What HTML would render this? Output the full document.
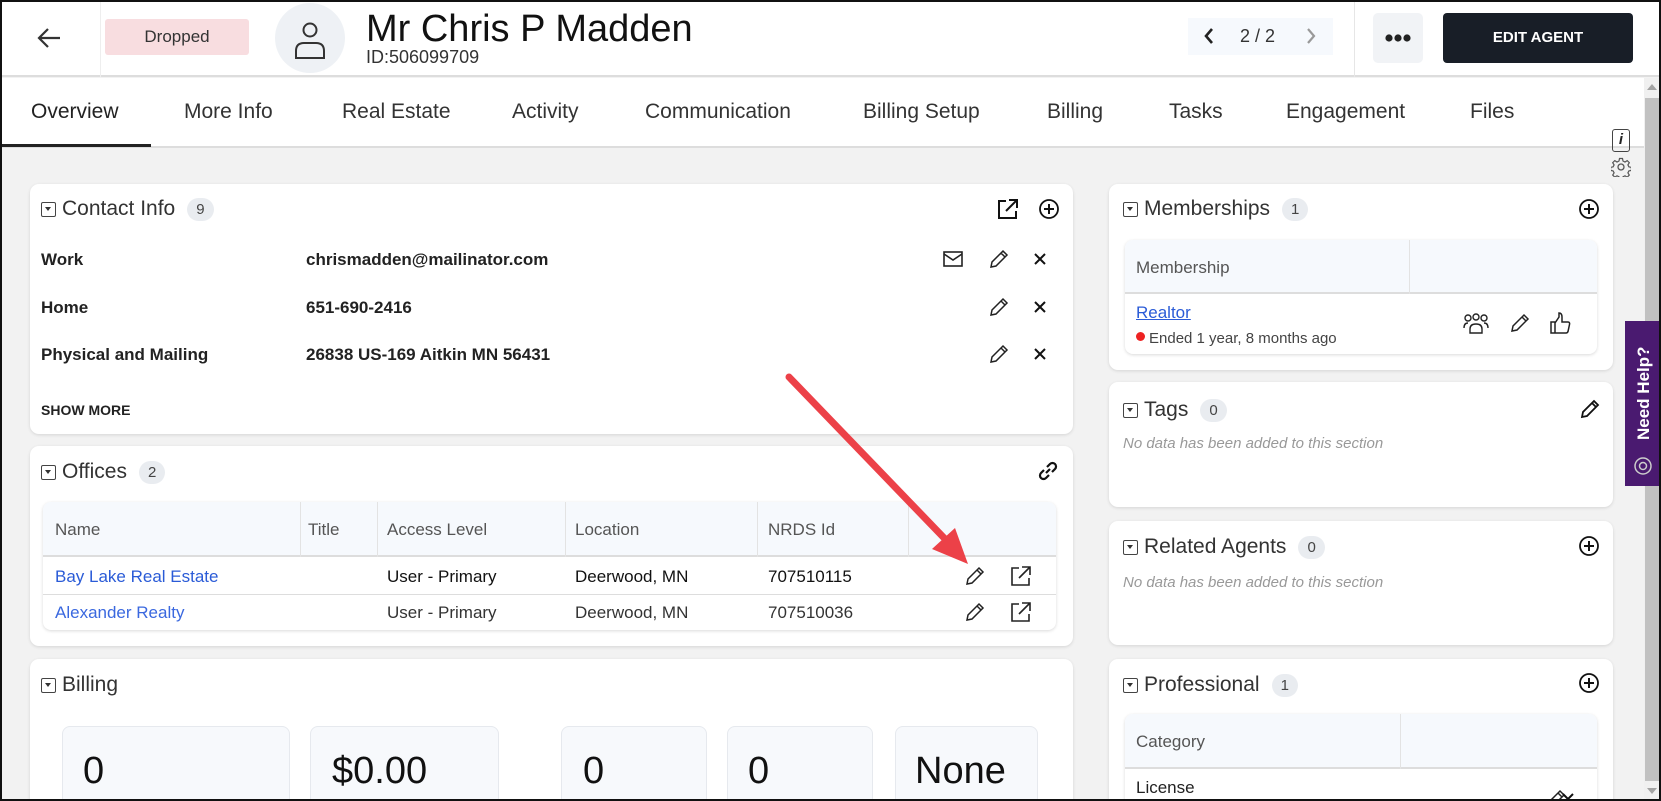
<!DOCTYPE html>
<html style="overflow:hidden;width:1661px;height:801px"><head><meta charset="utf-8"><style>
*{box-sizing:border-box;margin:0;padding:0}
html,body{width:1661px;height:801px;overflow:hidden}
body{background:#f2f2f2;font-family:"Liberation Sans",sans-serif;color:#222}
#w{position:relative;width:1661px;height:801px;overflow:hidden}
.a{position:absolute}
.card{position:absolute;background:#fff;border-radius:9px;box-shadow:0 1px 3px rgba(0,0,0,.12)}
.tab{position:absolute;top:100px;font-size:21px;color:#333}
.ttl{position:absolute;font-size:21px;color:#333;display:flex;align-items:center;gap:6px}
.chk{width:15px;height:15px;border:1.5px solid #444;border-radius:2px;position:relative;display:inline-block}
.chk:after{content:"";position:absolute;left:3px;top:4px;border-left:3.5px solid transparent;border-right:3.5px solid transparent;border-top:4px solid #333}
.badge{display:inline-block;background:#e9ecf0;border-radius:12px;font-size:15px;padding:3px 9px;color:#444;margin-left:6px}
.lbl{position:absolute;font-size:17px;font-weight:bold;color:#222}
.th{position:absolute;font-size:17px;color:#555}
.td{position:absolute;font-size:17px}
.nod{position:absolute;font-size:15px;font-style:italic;color:#999}
.num{position:absolute;font-size:38px;color:#111}
.box{position:absolute;top:726px;height:80px;background:#f7f9fc;border:1px solid #e6e9ee;border-radius:8px}
svg{position:absolute}
</style></head><body><div id="w">
<div class="a" style="left:0;top:0;width:1661px;height:77px;background:#fff;border-bottom:2px solid #ddd"></div>
<div class="a" style="left:100px;top:0;width:1px;height:77px;background:#eee"></div>
<div class="a" style="left:1354px;top:0;width:1px;height:77px;background:#e6e6e6"></div>
<svg style="left:36px;top:26px" width="26" height="24" viewBox="0 0 26 24"><path d="M24 12H3M12 3L3 12l9 9" fill="none" stroke="#333" stroke-width="2.2"/></svg>
<div class="a" style="left:105px;top:19px;width:144px;height:36px;background:#f8dde0;border-radius:3px;font-size:17px;color:#333;text-align:center;line-height:36px">Dropped</div>
<div class="a" style="left:275px;top:3px;width:70px;height:70px;border-radius:50%;background:#eef1f5"></div>
<svg style="left:292px;top:20px" width="36" height="40" viewBox="0 0 36 40"><circle cx="18" cy="10" r="6.5" fill="none" stroke="#333" stroke-width="2"/><path d="M4 38V31q0-8 8-8h12q8 0 8 8v7z" fill="none" stroke="#333" stroke-width="2"/></svg>
<div class="a" style="left:366px;top:8px;font-size:38px;color:#111">Mr Chris P Madden</div>
<div class="a" style="left:366px;top:47px;font-size:18px;color:#333">ID:506099709</div>
<div class="a" style="left:1188px;top:18px;width:145px;height:37px;background:#f6f9fd"></div>
<svg style="left:1203px;top:27px" width="12" height="18" viewBox="0 0 12 18"><path d="M9 2L3 9l6 7" fill="none" stroke="#222" stroke-width="2.6"/></svg>
<div class="a" style="left:1240px;top:26px;font-size:18px;color:#333">2 / 2</div>
<svg style="left:1305px;top:27px" width="12" height="18" viewBox="0 0 12 18"><path d="M3 2l6 7-6 7" fill="none" stroke="#999" stroke-width="2.2"/></svg>
<div class="a" style="left:1373px;top:13px;width:50px;height:50px;background:#f1f3f6;border-radius:5px"></div>
<svg style="left:1385px;top:33px" width="28" height="10"><circle cx="4" cy="5" r="3.6" fill="#222"/><circle cx="13" cy="5" r="3.6" fill="#222"/><circle cx="22" cy="5" r="3.6" fill="#222"/></svg>
<div class="a" style="left:1443px;top:13px;width:190px;height:50px;background:#181e27;border-radius:4px;color:#fff;font-weight:bold;font-size:15px;text-align:center;line-height:50px">EDIT AGENT</div>
<div class="a" style="left:0;top:78px;width:1644px;height:70px;background:#fff;border-bottom:2px solid #ddd"></div>
<div class="a" style="left:0;top:144px;width:151px;height:3px;background:#222"></div>
<div class="tab" style="left:31px;color:#222">Overview</div>
<div class="tab" style="left:184px">More Info</div>
<div class="tab" style="left:342px">Real Estate</div>
<div class="tab" style="left:512px">Activity</div>
<div class="tab" style="left:645px">Communication</div>
<div class="tab" style="left:863px">Billing Setup</div>
<div class="tab" style="left:1047px">Billing</div>
<div class="tab" style="left:1169px">Tasks</div>
<div class="tab" style="left:1286px">Engagement</div>
<div class="tab" style="left:1470px">Files</div>
<div class="a" style="left:1644px;top:78px;width:17px;height:723px;background:#f0f0f0"></div>
<div class="a" style="left:1645px;top:98px;width:15px;height:683px;background:#c1c1c1"></div>
<div class="a" style="left:1647px;top:84px;border-left:5px solid transparent;border-right:5px solid transparent;border-bottom:6px solid #a3a3a3"></div>
<div class="a" style="left:1647px;top:788px;border-left:5px solid transparent;border-right:5px solid transparent;border-top:6px solid #a3a3a3"></div>
<div class="a" style="left:1612px;top:129px;width:18px;height:23px;border:1.5px solid #444;border-radius:3px;font-style:italic;font-weight:bold;font-size:15px;text-align:center;line-height:20px">i</div>
<svg style="left:1611px;top:157px" width="20" height="20" viewBox="0 0 20 20"><circle cx="10" cy="10" r="3" fill="none" stroke="#555" stroke-width="1.3"/><path d="M8.5 1.5h3l.5 2.5 2 1 2.2-1.4 2.1 2.1-1.4 2.2 1 2 2.5.5v3l-2.5.5-1 2 1.4 2.2-2.1 2.1-2.2-1.4-2 1-.5 2.5h-3l-.5-2.5-2-1-2.2 1.4-2.1-2.1 1.4-2.2-1-2-2.5-.5v-3l2.5-.5 1-2-1.4-2.2 2.1-2.1 2.2 1.4 2-1z" fill="none" stroke="#555" stroke-width="1.2"/></svg>
<div class="a" style="left:1625px;top:321px;width:36px;height:165px;background:#4a1a70"></div>
<div class="a" style="left:1629px;top:331px;width:30px;height:125px;color:#fff;font-weight:bold;font-size:17px;writing-mode:vertical-rl;transform:rotate(180deg);text-align:center;line-height:30px">Need Help?</div>
<svg style="left:1633px;top:456px" width="20" height="20" viewBox="0 0 20 20"><circle cx="10" cy="10" r="8" fill="none" stroke="#ccc" stroke-width="1.5"/><circle cx="10" cy="10" r="3.5" fill="none" stroke="#ccc" stroke-width="1.5"/></svg>

<div class="card" style="left:30px;top:184px;width:1043px;height:250px"></div>
<div class="ttl" style="left:41px;top:197px"><span class="chk"></span>Contact Info<span class="badge">9</span></div>
<svg style="left:997px;top:198px" width="22" height="22" viewBox="0 0 22 22"><path d="M9 3H2v17h17v-7M12 2h8v8M20 2L9 13" fill="none" stroke="#111" stroke-width="2"/></svg>
<svg style="left:1038px;top:198px" width="22" height="22" viewBox="0 0 22 22"><circle cx="11" cy="11" r="9" fill="none" stroke="#111" stroke-width="1.8"/><path d="M11 6v10M6 11h10" stroke="#111" stroke-width="2"/></svg>
<div class="lbl" style="left:41px;top:250px">Work</div><div class="lbl" style="left:306px;top:250px">chrismadden@mailinator.com</div>
<div class="lbl" style="left:41px;top:298px">Home</div><div class="lbl" style="left:306px;top:298px">651-690-2416</div>
<div class="lbl" style="left:41px;top:345px">Physical and Mailing</div><div class="lbl" style="left:306px;top:345px">26838 US-169 Aitkin MN 56431</div>
<div class="lbl" style="left:41px;top:402px;font-size:14px">SHOW MORE</div>
<svg style="left:943px;top:251px" width="20" height="16" viewBox="0 0 20 16"><rect x="1" y="1" width="18" height="14" fill="none" stroke="#222" stroke-width="1.6"/><path d="M1 3l9 6 9-6" fill="none" stroke="#222" stroke-width="1.6"/></svg>
<svg style="left:988px;top:248px" width="22" height="22" viewBox="0 0 22 22"><path d="M3 19l1-5L15 3l4 4L8 18z M13 5l4 4" fill="none" stroke="#222" stroke-width="1.5"/></svg>
<svg style="left:1033px;top:252px" width="14" height="14"><path d="M2 2l10 10M12 2L2 12" stroke="#111" stroke-width="2"/></svg>
<svg style="left:988px;top:296px" width="22" height="22" viewBox="0 0 22 22"><path d="M3 19l1-5L15 3l4 4L8 18z M13 5l4 4" fill="none" stroke="#222" stroke-width="1.5"/></svg>
<svg style="left:1033px;top:300px" width="14" height="14"><path d="M2 2l10 10M12 2L2 12" stroke="#111" stroke-width="2"/></svg>
<svg style="left:988px;top:343px" width="22" height="22" viewBox="0 0 22 22"><path d="M3 19l1-5L15 3l4 4L8 18z M13 5l4 4" fill="none" stroke="#222" stroke-width="1.5"/></svg>
<svg style="left:1033px;top:347px" width="14" height="14"><path d="M2 2l10 10M12 2L2 12" stroke="#111" stroke-width="2"/></svg>

<div class="card" style="left:30px;top:446px;width:1043px;height:200px"></div>
<div class="ttl" style="left:41px;top:460px"><span class="chk"></span>Offices<span class="badge">2</span></div>
<svg style="left:1037px;top:460px" width="22" height="22" viewBox="0 0 22 22"><path d="M9 13l4-4M7 10l-3 3a3.5 3.5 0 005 5l3-3M15 12l3-3a3.5 3.5 0 00-5-5l-3 3" fill="none" stroke="#111" stroke-width="2.2"/></svg>
<div class="a" style="left:43px;top:502px;width:1013px;height:128px;border-radius:8px;background:#fff;box-shadow:0 1px 3px rgba(0,0,0,.15);overflow:hidden">
 <div class="a" style="left:0;top:0;width:1013px;height:55px;background:#f6f9fd;border-bottom:2px solid #ddd"></div>
 <div class="a" style="left:257px;top:0;width:1px;height:55px;background:#e3e3e3"></div>
 <div class="a" style="left:334px;top:0;width:1px;height:55px;background:#e3e3e3"></div>
 <div class="a" style="left:522px;top:0;width:1px;height:55px;background:#e3e3e3"></div>
 <div class="a" style="left:714px;top:0;width:1px;height:55px;background:#e3e3e3"></div>
 <div class="a" style="left:865px;top:0;width:1px;height:55px;background:#e3e3e3"></div>
 <div class="a" style="left:0;top:92px;width:1013px;height:1px;background:#ddd"></div>
</div>
<div class="th" style="left:55px;top:520px">Name</div><div class="th" style="left:308px;top:520px">Title</div><div class="th" style="left:387px;top:520px">Access Level</div><div class="th" style="left:575px;top:520px">Location</div><div class="th" style="left:768px;top:520px">NRDS Id</div>
<div class="td" style="left:55px;top:567px;color:#2a5bd7">Bay Lake Real Estate</div><div class="td" style="left:387px;top:567px;color:#111">User - Primary</div><div class="td" style="left:575px;top:567px;color:#111">Deerwood, MN</div><div class="td" style="left:768px;top:567px;color:#111">707510115</div>
<div class="td" style="left:55px;top:603px;color:#3a68df">Alexander Realty</div><div class="td" style="left:387px;top:603px;color:#333">User - Primary</div><div class="td" style="left:575px;top:603px;color:#333">Deerwood, MN</div><div class="td" style="left:768px;top:603px;color:#333">707510036</div>
<svg style="left:964px;top:565px" width="22" height="22" viewBox="0 0 22 22"><path d="M3 19l1-5L15 3l4 4L8 18z M13 5l4 4" fill="none" stroke="#222" stroke-width="1.5"/></svg>
<svg style="left:1010px;top:565px" width="22" height="22" viewBox="0 0 22 22"><path d="M9 3H2v17h17v-7M12 2h8v8M20 2L9 13" fill="none" stroke="#222" stroke-width="1.6"/></svg>
<svg style="left:964px;top:601px" width="22" height="22" viewBox="0 0 22 22"><path d="M3 19l1-5L15 3l4 4L8 18z M13 5l4 4" fill="none" stroke="#222" stroke-width="1.5"/></svg>
<svg style="left:1010px;top:601px" width="22" height="22" viewBox="0 0 22 22"><path d="M9 3H2v17h17v-7M12 2h8v8M20 2L9 13" fill="none" stroke="#222" stroke-width="1.6"/></svg>

<div class="card" style="left:30px;top:659px;width:1043px;height:150px"></div>
<div class="ttl" style="left:41px;top:673px"><span class="chk"></span>Billing</div>
<div class="box" style="left:62px;width:228px"></div><div class="num" style="left:83px;top:750px">0</div>
<div class="box" style="left:310px;width:189px"></div><div class="num" style="left:332px;top:750px">$0.00</div>
<div class="box" style="left:561px;width:146px"></div><div class="num" style="left:583px;top:750px">0</div>
<div class="box" style="left:727px;width:146px"></div><div class="num" style="left:748px;top:750px">0</div>
<div class="box" style="left:895px;width:143px"></div><div class="num" style="left:915px;top:750px">None</div>

<div class="card" style="left:1109px;top:184px;width:504px;height:186px"></div>
<div class="ttl" style="left:1123px;top:197px"><span class="chk"></span>Memberships<span class="badge">1</span></div>
<svg style="left:1578px;top:198px" width="22" height="22" viewBox="0 0 22 22"><circle cx="11" cy="11" r="9" fill="none" stroke="#111" stroke-width="1.8"/><path d="M11 6v10M6 11h10" stroke="#111" stroke-width="2"/></svg>
<div class="a" style="left:1125px;top:240px;width:472px;height:114px;border-radius:8px;background:#fff;box-shadow:0 1px 3px rgba(0,0,0,.15);overflow:hidden">
 <div class="a" style="left:0;top:0;width:472px;height:54px;background:#f6f9fd;border-bottom:2px solid #ddd"></div>
 <div class="a" style="left:284px;top:0;width:1px;height:54px;background:#e3e3e3"></div>
</div>
<div class="th" style="left:1136px;top:258px">Membership</div>
<div class="td" style="left:1136px;top:303px;color:#2a5bd7;text-decoration:underline">Realtor</div>
<div class="a" style="left:1136px;top:332px;width:9px;height:9px;border-radius:50%;background:#e22"></div>
<div class="td" style="left:1149px;top:330px;font-size:15px;color:#444">Ended 1 year, 8 months ago</div>
<svg style="left:1462px;top:313px" width="28" height="22" viewBox="0 0 28 22"><g fill="none" stroke="#222" stroke-width="1.4"><circle cx="6" cy="5" r="3"/><circle cx="14" cy="4" r="3"/><circle cx="22" cy="5" r="3"/><path d="M2 15q0-5 4-5M26 15q0-5-4-5M8 20v-4q0-5 6-5t6 5v4z"/></g></svg>
<svg style="left:1509px;top:312px" width="22" height="22" viewBox="0 0 22 22"><path d="M3 19l1-5L15 3l4 4L8 18z M13 5l4 4" fill="none" stroke="#222" stroke-width="1.5"/></svg>
<svg style="left:1549px;top:311px" width="22" height="24" viewBox="0 0 22 24"><path d="M2 11h4v11H2zM6 12l4-6V2q3 0 3 4v5h6q2 0 1.5 2.5l-1.5 7q-.5 1.5-2 1.5H6" fill="none" stroke="#222" stroke-width="1.5"/></svg>

<div class="card" style="left:1109px;top:382px;width:504px;height:125px"></div>
<div class="ttl" style="left:1123px;top:398px"><span class="chk"></span>Tags<span class="badge">0</span></div>
<div class="nod" style="left:1123px;top:435px">No data has been added to this section</div>
<svg style="left:1579px;top:398px" width="22" height="22" viewBox="0 0 22 22"><path d="M3 19l1-5L15 3l4 4L8 18z M13 5l4 4" fill="none" stroke="#111" stroke-width="1.8"/></svg>

<div class="card" style="left:1109px;top:521px;width:504px;height:124px"></div>
<div class="ttl" style="left:1123px;top:535px"><span class="chk"></span>Related Agents<span class="badge">0</span></div>
<div class="nod" style="left:1123px;top:574px">No data has been added to this section</div>
<svg style="left:1578px;top:535px" width="22" height="22" viewBox="0 0 22 22"><circle cx="11" cy="11" r="9" fill="none" stroke="#111" stroke-width="1.8"/><path d="M11 6v10M6 11h10" stroke="#111" stroke-width="2"/></svg>

<div class="card" style="left:1109px;top:659px;width:504px;height:150px"></div>
<div class="ttl" style="left:1123px;top:673px"><span class="chk"></span>Professional<span class="badge">1</span></div>
<svg style="left:1578px;top:672px" width="22" height="22" viewBox="0 0 22 22"><circle cx="11" cy="11" r="9" fill="none" stroke="#111" stroke-width="1.8"/><path d="M11 6v10M6 11h10" stroke="#111" stroke-width="2"/></svg>
<div class="a" style="left:1125px;top:714px;width:472px;height:100px;border-radius:8px;background:#fff;box-shadow:0 1px 3px rgba(0,0,0,.15);overflow:hidden">
 <div class="a" style="left:0;top:0;width:472px;height:55px;background:#f6f9fd;border-bottom:2px solid #ddd"></div>
 <div class="a" style="left:275px;top:0;width:1px;height:55px;background:#e3e3e3"></div>
</div>
<div class="th" style="left:1136px;top:732px">Category</div>
<div class="td" style="left:1136px;top:778px;color:#222">License</div>
<svg style="left:1545px;top:788px" width="22" height="22" viewBox="0 0 22 22"><path d="M3 19l1-5L15 3l4 4L8 18z M13 5l4 4" fill="none" stroke="#222" stroke-width="1.5"/></svg>
<svg style="left:1561px;top:792px" width="14" height="14"><path d="M2 2l10 10M12 2L2 12" stroke="#111" stroke-width="2"/></svg>

<svg style="left:0;top:0" width="1661" height="801"><line x1="789" y1="377" x2="947" y2="541" stroke="#ec4148" stroke-width="7" stroke-linecap="round"/><polygon points="968,564 932,549 955,528" fill="#ec4148"/></svg>
<div class="a" style="left:0;top:0;width:1661px;height:801px;border:2px solid #111;pointer-events:none"></div>
</div></body></html>
